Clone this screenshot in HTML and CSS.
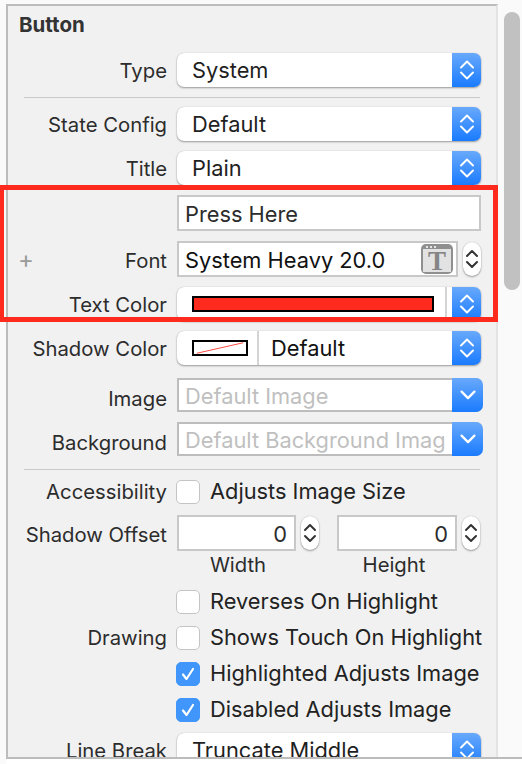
FILE: index.html
```html
<!DOCTYPE html>
<html lang="en">
<head>
  <meta charset="UTF-8">
  <meta name="viewport" content="width=device-width, initial-scale=1.0">
  <title>Button Inspector</title>
  <link rel="stylesheet" href="styles.css">
</head>
<body>
  <div class="inspector">
    <svg width="0" height="0" class="defs">
      <symbol id="updown" viewBox="0 0 16 22">
        <path d="M2 8.5 L8 2.5 L14 8.5 M2 13.5 L8 19.5 L14 13.5" fill="none" stroke="currentColor" stroke-width="1.9" stroke-linecap="round" stroke-linejoin="round"/>
      </symbol>
      <symbol id="stepper" viewBox="0 0 14 24">
        <path d="M2 9 L7 4 L12 9 M2 15 L7 20 L12 15" fill="none" stroke="currentColor" stroke-width="2" stroke-linecap="round" stroke-linejoin="round"/>
      </symbol>
      <symbol id="down" viewBox="0 0 14 10">
        <path d="M2 2 L7 7 L12 2" fill="none" stroke="currentColor" stroke-width="1.8" stroke-linecap="round" stroke-linejoin="round"/>
      </symbol>
      <symbol id="check" viewBox="0 0 16 16">
        <path d="M3 8.5 L6.5 13 L13 3" fill="none" stroke="#fff" stroke-width="2.2" stroke-linecap="round" stroke-linejoin="round"/>
      </symbol>
    </svg>

    <div class="panel">
      <h2>Button</h2>

      <div class="row">
        <label>Type</label>
        <div class="popup"><span class="value">System</span><span class="arrows"><svg><use href="#updown"/></svg></span></div>
      </div>

      <hr>

      <div class="row">
        <label>State Config</label>
        <div class="popup"><span class="value">Default</span><span class="arrows"><svg><use href="#updown"/></svg></span></div>
      </div>

      <div class="row">
        <label>Title</label>
        <div class="popup"><span class="value">Plain</span><span class="arrows"><svg><use href="#updown"/></svg></span></div>
      </div>

      <div class="row tall">
        <label></label>
        <div class="field">Press Here</div>
      </div>

      <div class="row tall">
        <label><span class="plus">+</span>Font</label>
        <div class="field-step">
          <div class="field font-field">
            <span class="font-name">System Heavy 20.0</span>
            <span class="font-icon"><span class="t">T</span></span>
          </div>
          <span class="stepper"><svg><use href="#stepper"/></svg></span>
        </div>
      </div>

      <div class="row">
        <label>Text Color</label>
        <div class="popup">
          <span class="color-cell"><span class="swatch-red"></span></span>
          <span class="arrows"><svg><use href="#updown"/></svg></span>
        </div>
      </div>

      <div class="row">
        <label>Shadow Color</label>
        <div class="popup">
          <span class="shadow-cell">
            <svg class="swatch-none" viewBox="0 0 56 16" preserveAspectRatio="none"><path d="M3 15 L53 1" stroke="#ff2a1e" stroke-width="1"/></svg>
          </span>
          <span class="value strong">Default</span>
          <span class="arrows"><svg><use href="#updown"/></svg></span>
        </div>
      </div>

      <div class="row group combo-row">
        <label>Image</label>
        <div class="combo"><span class="placeholder">Default Image</span><span class="arrows"><svg class="down"><use href="#down"/></svg></span></div>
      </div>

      <div class="row combo-row">
        <label>Background</label>
        <div class="combo"><span class="placeholder">Default Background Imag</span><span class="arrows"><svg class="down"><use href="#down"/></svg></span></div>
      </div>

      <hr class="wide">

      <div class="row check-row before-offset">
        <label>Accessibility</label>
        <div class="check"><span class="box"></span>Adjusts Image Size</div>
      </div>

      <div class="row tall">
        <label>Shadow Offset</label>
        <div class="offset">
          <div class="field num">0</div>
          <span class="stepper"><svg><use href="#stepper"/></svg></span>
          <div class="field num second">0</div>
          <span class="stepper"><svg><use href="#stepper"/></svg></span>
        </div>
      </div>

      <div class="row captions">
        <label></label>
        <div class="offset-labels"><span>Width</span><span>Height</span></div>
      </div>

      <div class="row check-row after-captions">
        <label></label>
        <div class="check"><span class="box"></span>Reverses On Highlight</div>
      </div>

      <div class="row check-row">
        <label>Drawing</label>
        <div class="check"><span class="box"></span>Shows Touch On Highlight</div>
      </div>

      <div class="row check-row">
        <label></label>
        <div class="check"><span class="box on"><svg><use href="#check"/></svg></span>Highlighted Adjusts Image</div>
      </div>

      <div class="row check-row last-check">
        <label></label>
        <div class="check"><span class="box on"><svg><use href="#check"/></svg></span>Disabled Adjusts Image</div>
      </div>

      <div class="row">
        <label>Line Break</label>
        <div class="popup"><span class="value">Truncate Middle</span><span class="arrows"><svg><use href="#updown"/></svg></span></div>
      </div>
    </div>

    <div class="scroll"><div class="thumb"></div></div>

    <div class="highlight"></div>
    <div class="bottom"></div>
  </div>
</body>
</html>
```

FILE: styles.css
```css
/* General Reset */
body, h2, hr {
  margin: 0;
  padding: 0;
}

body {
  width: 522px;
  height: 764px;
  overflow: hidden;
  background-color: #fafafa;
  font-family: 'Inter', 'Liberation Sans', sans-serif;
  font-size: 20.3px;
  color: #2c2c2c;
}

.defs {
  position: absolute;
}

/* Frame */
.inspector {
  position: relative;
  display: flex;
  height: 764px;
  padding-top: 4px;
  box-sizing: border-box;
}

.panel {
  box-sizing: border-box;
  width: 492px;
  margin-left: 6px;
  padding-top: 8px;
  height: 760px;
  overflow: hidden;
  display: flex;
  flex-direction: column;
  gap: 10px;
  background-color: #f1f1f1;
  border-top: 2px solid #bcbcbc;
  border-left: 2px solid #bcbcbc;
  border-right: 2px solid #e4e4e4;
}

h2 {
  flex: none;
  font-size: 20.5px;
  font-weight: 700;
  color: #333;
  margin-left: 11px;
  height: 22px;
  line-height: 22px;
  margin-bottom: 7px;
}

hr {
  flex: none;
  border: 0;
  height: 1px;
  background-color: #c9c9c9;
  margin: 0 16px -1px 16px;
}

hr.wide {
  margin-top: 3px;
  margin-bottom: 0;
}

.row {
  display: grid;
  grid-template-columns: 159px 304px;
  column-gap: 10px;
  height: 34px;
  flex: none;
  align-items: center;
}

.row.tall {
  height: 36px;
}

.row.tall label {
  padding-top: 2px;
}

.row.group {
  margin-top: 3px;
}

.row.combo-row label {
  padding-top: 7px;
}

.row.check-row {
  height: 24px;
  margin-bottom: 2px;
}

.row.check-row label {
  margin-top: -2px;
}

.row.before-offset {
  margin-bottom: 1px;
}

.row.last-check {
  margin-bottom: 1px;
}

.row.captions {
  height: 24px;
  margin-top: -9px;
}

.row.after-captions {
  margin-top: 4px;
}

label {
  display: block;
  position: relative;
  text-align: right;
}

.plus {
  position: absolute;
  left: 10px;
  top: -1px;
  color: #9a9a9a;
  font-size: 24px;
}

/* Popups */
.popup {
  display: flex;
  align-items: center;
  height: 34px;
  background-color: #fff;
  border-radius: 7px;
  box-shadow: 0 1px 2px rgba(0, 0, 0, 0.35), 0 0 1px rgba(0, 0, 0, 0.25);
  overflow: hidden;
}

.value {
  flex: 1;
  padding-left: 15px;
  font-size: 21.8px;
  color: #1f1f1f;
}

.value.strong {
  padding-left: 12px;
  color: #111;
}

.arrows {
  flex: none;
  display: flex;
  align-items: center;
  justify-content: center;
  width: 29px;
  height: 100%;
  color: #fff;
  background: linear-gradient(#68a9fb, #1a7bff);
}

.arrows svg {
  width: 16px;
  height: 22px;
}

.arrows svg.down {
  width: 18px;
  height: 13px;
}

.color-cell {
  flex: 1;
  display: flex;
  align-items: center;
  height: 100%;
  padding-left: 15px;
  margin-right: 5px;
  border-right: 2px solid #d4d4d4;
}

.swatch-red {
  box-sizing: border-box;
  width: 242px;
  height: 16px;
  background-color: #ff2a1e;
  border: 2px solid #000;
}

.shadow-cell {
  display: flex;
  align-items: center;
  flex: none;
  box-sizing: border-box;
  width: 82px;
  height: 100%;
  padding-left: 15px;
  border-right: 2px solid #d4d4d4;
}

.swatch-none {
  box-sizing: border-box;
  width: 56px;
  height: 16px;
  background-color: #fff;
  border: 2px solid #000;
}

/* Fields */
.field {
  box-sizing: border-box;
  height: 36px;
  line-height: 34px;
  padding-left: 6px;
  background-color: #fff;
  border: 2px solid #c8c8c8;
  font-size: 21.8px;
  color: #2c2c2c;
}

.field-step {
  display: flex;
  align-items: center;
  gap: 5px;
}

.font-field {
  flex: 1;
  display: flex;
  justify-content: space-between;
  align-items: center;
  padding-right: 3px;
  color: #111;
}

.font-name {
  margin-top: 1px;
}

.font-icon {
  box-sizing: border-box;
  width: 32px;
  height: 30px;
  padding: 2px 2px 0;
  border-radius: 5px;
  background-color: #8f8f8f;
  display: flex;
  flex-direction: column;
}

.font-icon::before {
  content: "";
  flex: none;
  width: 11px;
  height: 2px;
  margin: 0 0 1px 3px;
  background: repeating-linear-gradient(90deg, #e6e6e6 0 2px, transparent 2px 4px);
}

.t {
  display: block;
  height: 23px;
  line-height: 24px;
  text-align: center;
  background-color: #e2e2e2;
  font-family: 'Liberation Serif', serif;
  font-weight: 700;
  font-size: 27px;
  color: #858585;
}

.stepper {
  flex: none;
  display: flex;
  align-items: center;
  justify-content: center;
  width: 18px;
  height: 34px;
  border-radius: 9px;
  background-color: #fff;
  color: #333;
  box-shadow: 0 1px 2px rgba(0, 0, 0, 0.35), 0 0 1px rgba(0, 0, 0, 0.25);
}

.stepper svg {
  width: 14px;
  height: 24px;
}

/* Combo boxes, a bit wider than the popups */
.combo {
  display: flex;
  align-items: stretch;
  box-sizing: border-box;
  width: 306px;
  height: 34px;
  background-color: #fff;
  border: 2px solid #bdbdbd;
  border-right: 0;
  border-radius: 0 7px 7px 0;
}

.placeholder {
  flex: 1;
  min-width: 0;
  overflow: hidden;
  white-space: nowrap;
  padding-left: 6px;
  line-height: 33px;
  font-size: 21.8px;
  color: #bfbfbf;
}

.combo .arrows {
  width: 31px;
  margin: -2px 0;
  height: 34px;
  border-radius: 0 7px 7px 0;
}

/* Offset */
.offset {
  display: flex;
  align-items: center;
  gap: 5px;
}

.num {
  width: 119px;
  padding: 0 7px 0 0;
  text-align: right;
}

.num.second {
  width: 120px;
  margin-left: 13px;
}

.offset-labels {
  display: flex;
}

.offset-labels span {
  width: 122px;
  text-align: center;
}

.offset-labels span + span {
  width: 114px;
  margin-left: 38px;
}

/* Checkboxes */
.check {
  display: flex;
  align-items: flex-start;
  gap: 10px;
  margin-left: -1px;
  white-space: nowrap;
  line-height: 22px;
  font-size: 21.8px;
  color: #222;
}

.box {
  box-sizing: border-box;
  flex: none;
  width: 24px;
  height: 24px;
  border-radius: 5px;
  background-color: #fff;
  border: 1px solid #c4c4c4;
}

.box.on {
  display: flex;
  align-items: center;
  justify-content: center;
  background-color: #4096fb;
  border-color: #4096fb;
}

.box svg {
  width: 16px;
  height: 16px;
}

/* Scrollbar */
.scroll {
  flex: 1;
  padding: 8px 2px 0 6px;
}

.thumb {
  width: 16px;
  height: 278px;
  border-radius: 8px;
  background-color: #c1c1c1;
}

/* Overlays */
.highlight {
  position: absolute;
  left: 0;
  top: 185px;
  width: 498px;
  height: 137px;
  box-sizing: border-box;
  border: 5px solid #ff2a1e;
  border-left-width: 4px;
}

.bottom {
  position: absolute;
  left: 6px;
  right: 0;
  top: 757px;
  height: 7px;
  box-sizing: border-box;
  background-color: #fff;
  border-top: 2px solid #bcbcbc;
}
```
